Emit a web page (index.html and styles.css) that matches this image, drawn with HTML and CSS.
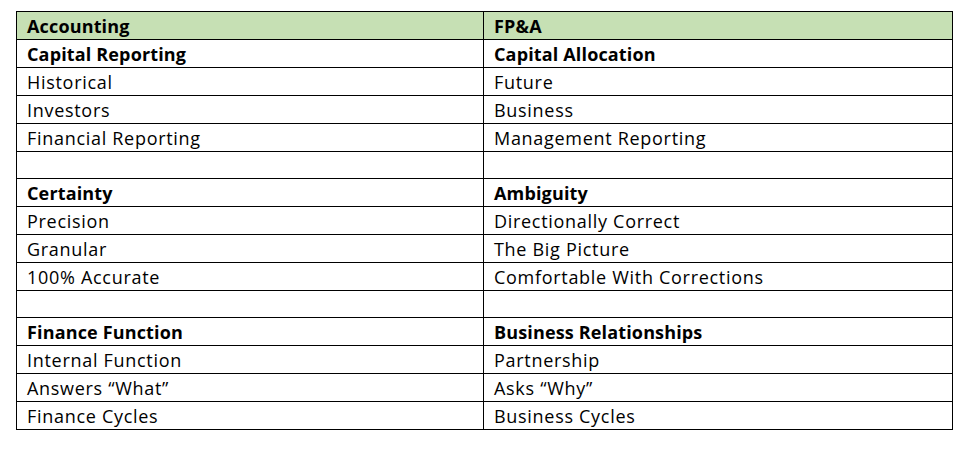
FILE: index.html
```html
<!DOCTYPE html>
<html>
<head>
<meta charset="utf-8">
<link rel="stylesheet" href="styles.css">
</head>
<body>
<table class="cmp">
  <colgroup><col class="c1"><col class="c2"></colgroup>
  <tr class="head"><td>Accounting</td><td>FP&amp;A</td></tr>
  <tr class="b"><td>Capital Reporting</td><td>Capital Allocation</td></tr>
  <tr><td>Historical</td><td>Future</td></tr>
  <tr><td>Investors</td><td>Business</td></tr>
  <tr><td>Financial Reporting</td><td>Management Reporting</td></tr>
  <tr><td></td><td></td></tr>
  <tr class="b"><td>Certainty</td><td>Ambiguity</td></tr>
  <tr><td>Precision</td><td>Directionally Correct</td></tr>
  <tr><td>Granular</td><td>The Big Picture</td></tr>
  <tr><td>100% Accurate</td><td>Comfortable With Corrections</td></tr>
  <tr><td></td><td></td></tr>
  <tr class="b"><td>Finance Function</td><td>Business Relationships</td></tr>
  <tr><td>Internal Function</td><td>Partnership</td></tr>
  <tr><td>Answers “What”</td><td>Asks “Why”</td></tr>
  <tr><td>Finance Cycles</td><td>Business Cycles</td></tr>
</table>
</body>
</html>
```

FILE: styles.css
```css
html, body {
  margin: 0;
  padding: 0;
  background: #ffffff;
}
.cmp {
  margin: 11px 0 0 16px;
  border-collapse: collapse;
  table-layout: fixed;
  width: 936px;
  font-family: "Open Sans", Lato, sans-serif;
  font-size: 18px;
  letter-spacing: 0.7px;
  color: #000000;
}
.c1 { width: 467px; }
.c2 { width: 469px; }
.cmp td {
  border: 1px solid #000000;
  height: 27px;
  padding: 1px 0 0 10px;
  box-sizing: border-box;
  line-height: 26px;
  vertical-align: middle;
  white-space: nowrap;
}
.head td {
  background: #c6e0b4;
  font-weight: 700;
  letter-spacing: 0.15px;
}
.b td {
  font-weight: 700;
  letter-spacing: 0.15px;
}
```
